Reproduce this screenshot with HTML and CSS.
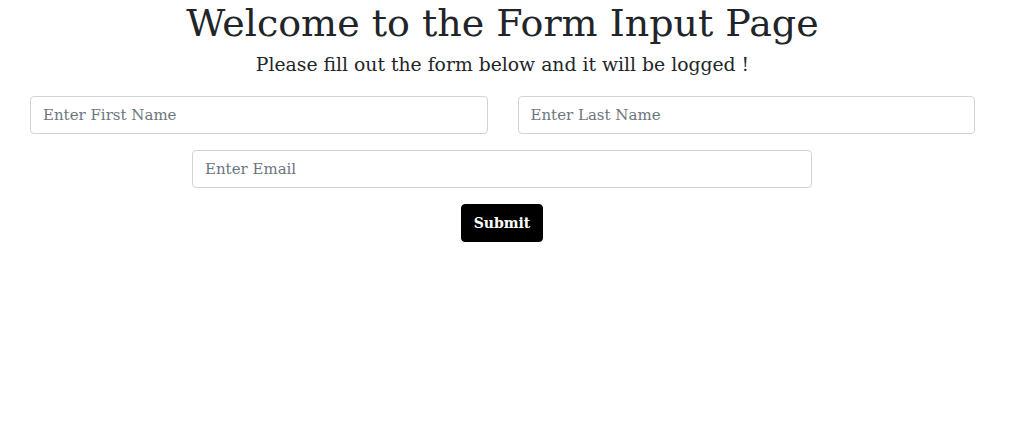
FILE: index.html
```html
<!DOCTYPE html>
<html lang="en">
<head>
<meta charset="utf-8">
<title>Form Input Page</title>
<link rel="stylesheet" href="styles.css">
</head>
<body>
<main class="page">
  <h1 class="title">Welcome to the Form Input Page</h1>
  <p class="subtitle">Please fill out the form below and it will be logged !</p>
  <form class="form">
    <div class="row">
      <div class="col"><input class="field" type="text" placeholder="Enter First Name"></div>
      <div class="col"><input class="field" type="text" placeholder="Enter Last Name"></div>
    </div>
    <div class="row center">
      <input class="field email" type="email" placeholder="Enter Email">
    </div>
    <div class="row center">
      <button class="submit" type="button">Submit</button>
    </div>
  </form>
</main>
</body>
</html>
```
FILE: styles.css
```css
html, body {
  margin: 0;
  padding: 0;
  background: #fff;
}
body {
  font-family: "DejaVu Serif", "Liberation Serif", serif;
  color: #212529;
}
.page {
  width: 975px;
  margin: 0 15px;
  text-align: center;
}
.title {
  margin: 0;
  padding-top: 0;
  font-size: 38px;
  font-weight: 400;
  line-height: 46px;
}
.subtitle {
  margin: 6px 0 0;
  font-size: 18.8px;
  line-height: 26px;
}
.form {
  display: flex;
  flex-direction: column;
  gap: 16px;
  margin-top: 18px;
}
.row {
  display: flex;
}
.row.center {
  justify-content: center;
}
.col {
  flex: 1;
  padding: 0 15px;
}
.field {
  box-sizing: border-box;
  width: 100%;
  height: 38px;
  padding: 6px 12px;
  border: 1px solid #ced4da;
  border-radius: 4px;
  font-family: inherit;
  font-size: 15px;
  color: #495057;
  background: #fff;
  outline: none;
}
.field::placeholder {
  color: #6c757d;
  opacity: 1;
}
.field.email {
  width: 620px;
  margin-right: 1px;
}
.submit {
  box-sizing: border-box;
  width: 82px;
  height: 38px;
  margin-right: 1px;
  border: 1px solid #000;
  border-radius: 4px;
  background: #000;
  color: #fff;
  font-family: inherit;
  font-size: 14px;
  font-weight: 700;
  cursor: pointer;
}
```
